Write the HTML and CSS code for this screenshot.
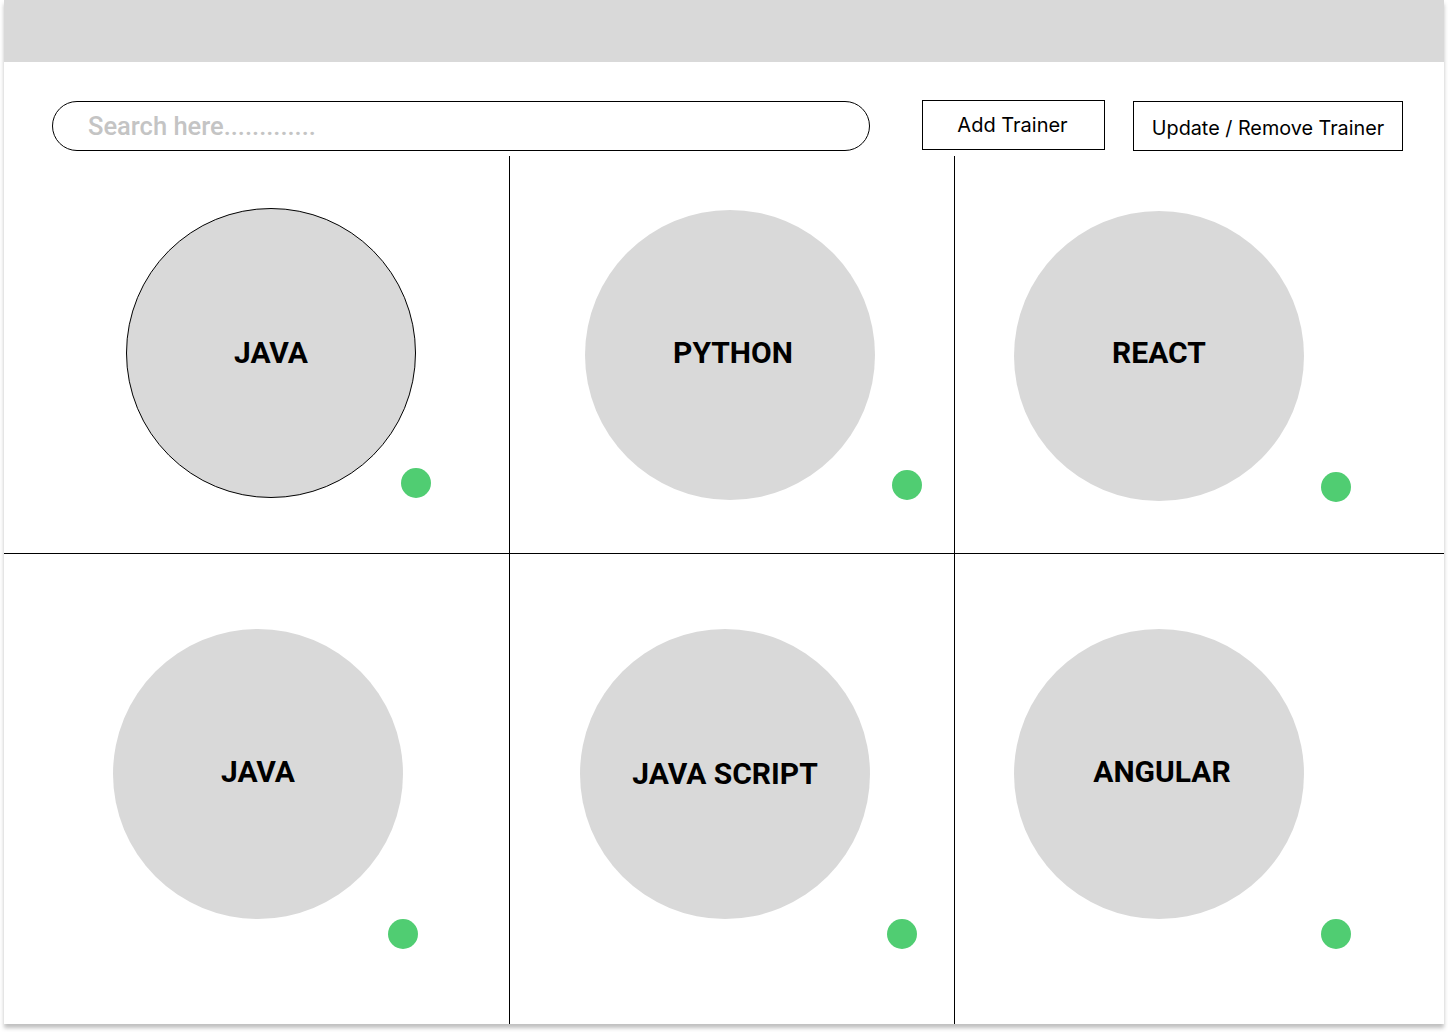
FILE: index.html
```html
<!DOCTYPE html>
<html>
<head>
<meta charset="utf-8">
<link rel="stylesheet" href="styles.css">
</head>
<body>
<div class="frame">
  <div class="topbar"></div>
  <div class="toolbar">
    <div class="search">Search here.............</div>
    <button class="btn btn-add">Add Trainer</button>
    <button class="btn btn-update">Update / Remove Trainer</button>
  </div>
  <div class="grid">
    <div class="cell c1"><div class="circle outlined"><span>JAVA</span></div><span class="dot"></span></div>
    <div class="cell c2"><div class="circle"><span>PYTHON</span></div><span class="dot"></span></div>
    <div class="cell c3"><div class="circle"><span>REACT</span></div><span class="dot"></span></div>
    <div class="cell c4"><div class="circle"><span>JAVA</span></div><span class="dot"></span></div>
    <div class="cell c5"><div class="circle"><span>JAVA SCRIPT</span></div><span class="dot"></span></div>
    <div class="cell c6"><div class="circle"><span>ANGULAR</span></div><span class="dot"></span></div>
  </div>
</div>
</body>
</html>
```
FILE: styles.css
```css
* { box-sizing: border-box; }
html, body { margin: 0; padding: 0; background: #ffffff; }
body { padding: 0 4px; width: 1448px; height: 1032px; overflow: hidden; }
.frame {
  width: 1440px;
  height: 1024px;
  background: #ffffff;
  box-shadow: 0 4px 4px rgba(0,0,0,0.25);
  display: flex;
  flex-direction: column;
}
.topbar { height: 62px; background: #d9d9d9; flex: none; }
.toolbar {
  height: 94px;
  display: flex;
  align-items: flex-start;
  padding-top: 38px;
  padding-left: 48px;
  flex: none;
}
.search {
  width: 818px;
  height: 50px;
  border: 1px solid #000;
  border-radius: 25px;
  font-family: Roboto, "Liberation Sans", sans-serif;
  font-weight: 500;
  font-size: 25.5px;
  color: #c4c4c4;
  padding-left: 35px;
  line-height: 48px;
  margin-top: 1px;
}
.btn {
  background: #fff;
  border: 1px solid #000;
  border-radius: 0;
  font-family: Inter, "Liberation Sans", sans-serif;
  font-size: 20px;
  color: #000;
  padding: 0;
  height: 50px;
}
.btn-add { width: 183px; margin-left: 52px; padding-right: 2px; }
.btn-update { width: 270px; margin-left: 28px; margin-top: 1px; padding-top: 4px; font-size: 19.8px; }
.grid {
  flex: 1;
  display: grid;
  grid-template-columns: 506px 445px 489px;
  grid-template-rows: 398px 470px;
}
.cell { position: relative; }
.c1, .c4 { border-right: 1px solid #000; }
.c2, .c5 { border-right: 1px solid #000; }
.c1, .c2, .c3 { border-bottom: 1px solid #000; }
.circle {
  width: 290px;
  height: 290px;
  border-radius: 50%;
  background: #d9d9d9;
  display: flex;
  align-items: center;
  justify-content: center;
  font-family: Roboto, "Liberation Sans", sans-serif;
  font-weight: 700;
  font-size: 30px;
  color: #000;
}
.circle.outlined { border: 1px solid #000; }
.dot {
  position: absolute;
  width: 30px;
  height: 30px;
  border-radius: 50%;
  background: #50cd72;
}
.c1 .circle { margin: 52px 0 0 122px; }
.c1 .circle span { margin-top: -2px; }
.c1 .dot { left: 397px; top: 312px; }
.c2 .circle { margin: 54px 0 0 75px; }
.c2 .circle span { margin-left: 6px; margin-top: -6px; }
.c2 .dot { left: 382px; top: 314px; }
.c3 .circle { margin: 55px 0 0 59px; }
.c3 .circle span { margin-top: -8px; }
.c3 .dot { left: 366px; top: 316px; }
.c4 .circle { margin: 75px 0 0 109px; }
.c4 .circle span { margin-top: -6px; }
.c4 .dot { left: 384px; top: 365px; }
.c5 .circle { margin: 75px 0 0 70px; }
.c5 .circle span { margin-top: -2px; }
.c5 .dot { left: 377px; top: 365px; }
.c6 .circle { margin: 75px 0 0 59px; }
.c6 .circle span { margin-left: 6px; margin-top: -6px; }
.c6 .dot { left: 366px; top: 365px; }
```
